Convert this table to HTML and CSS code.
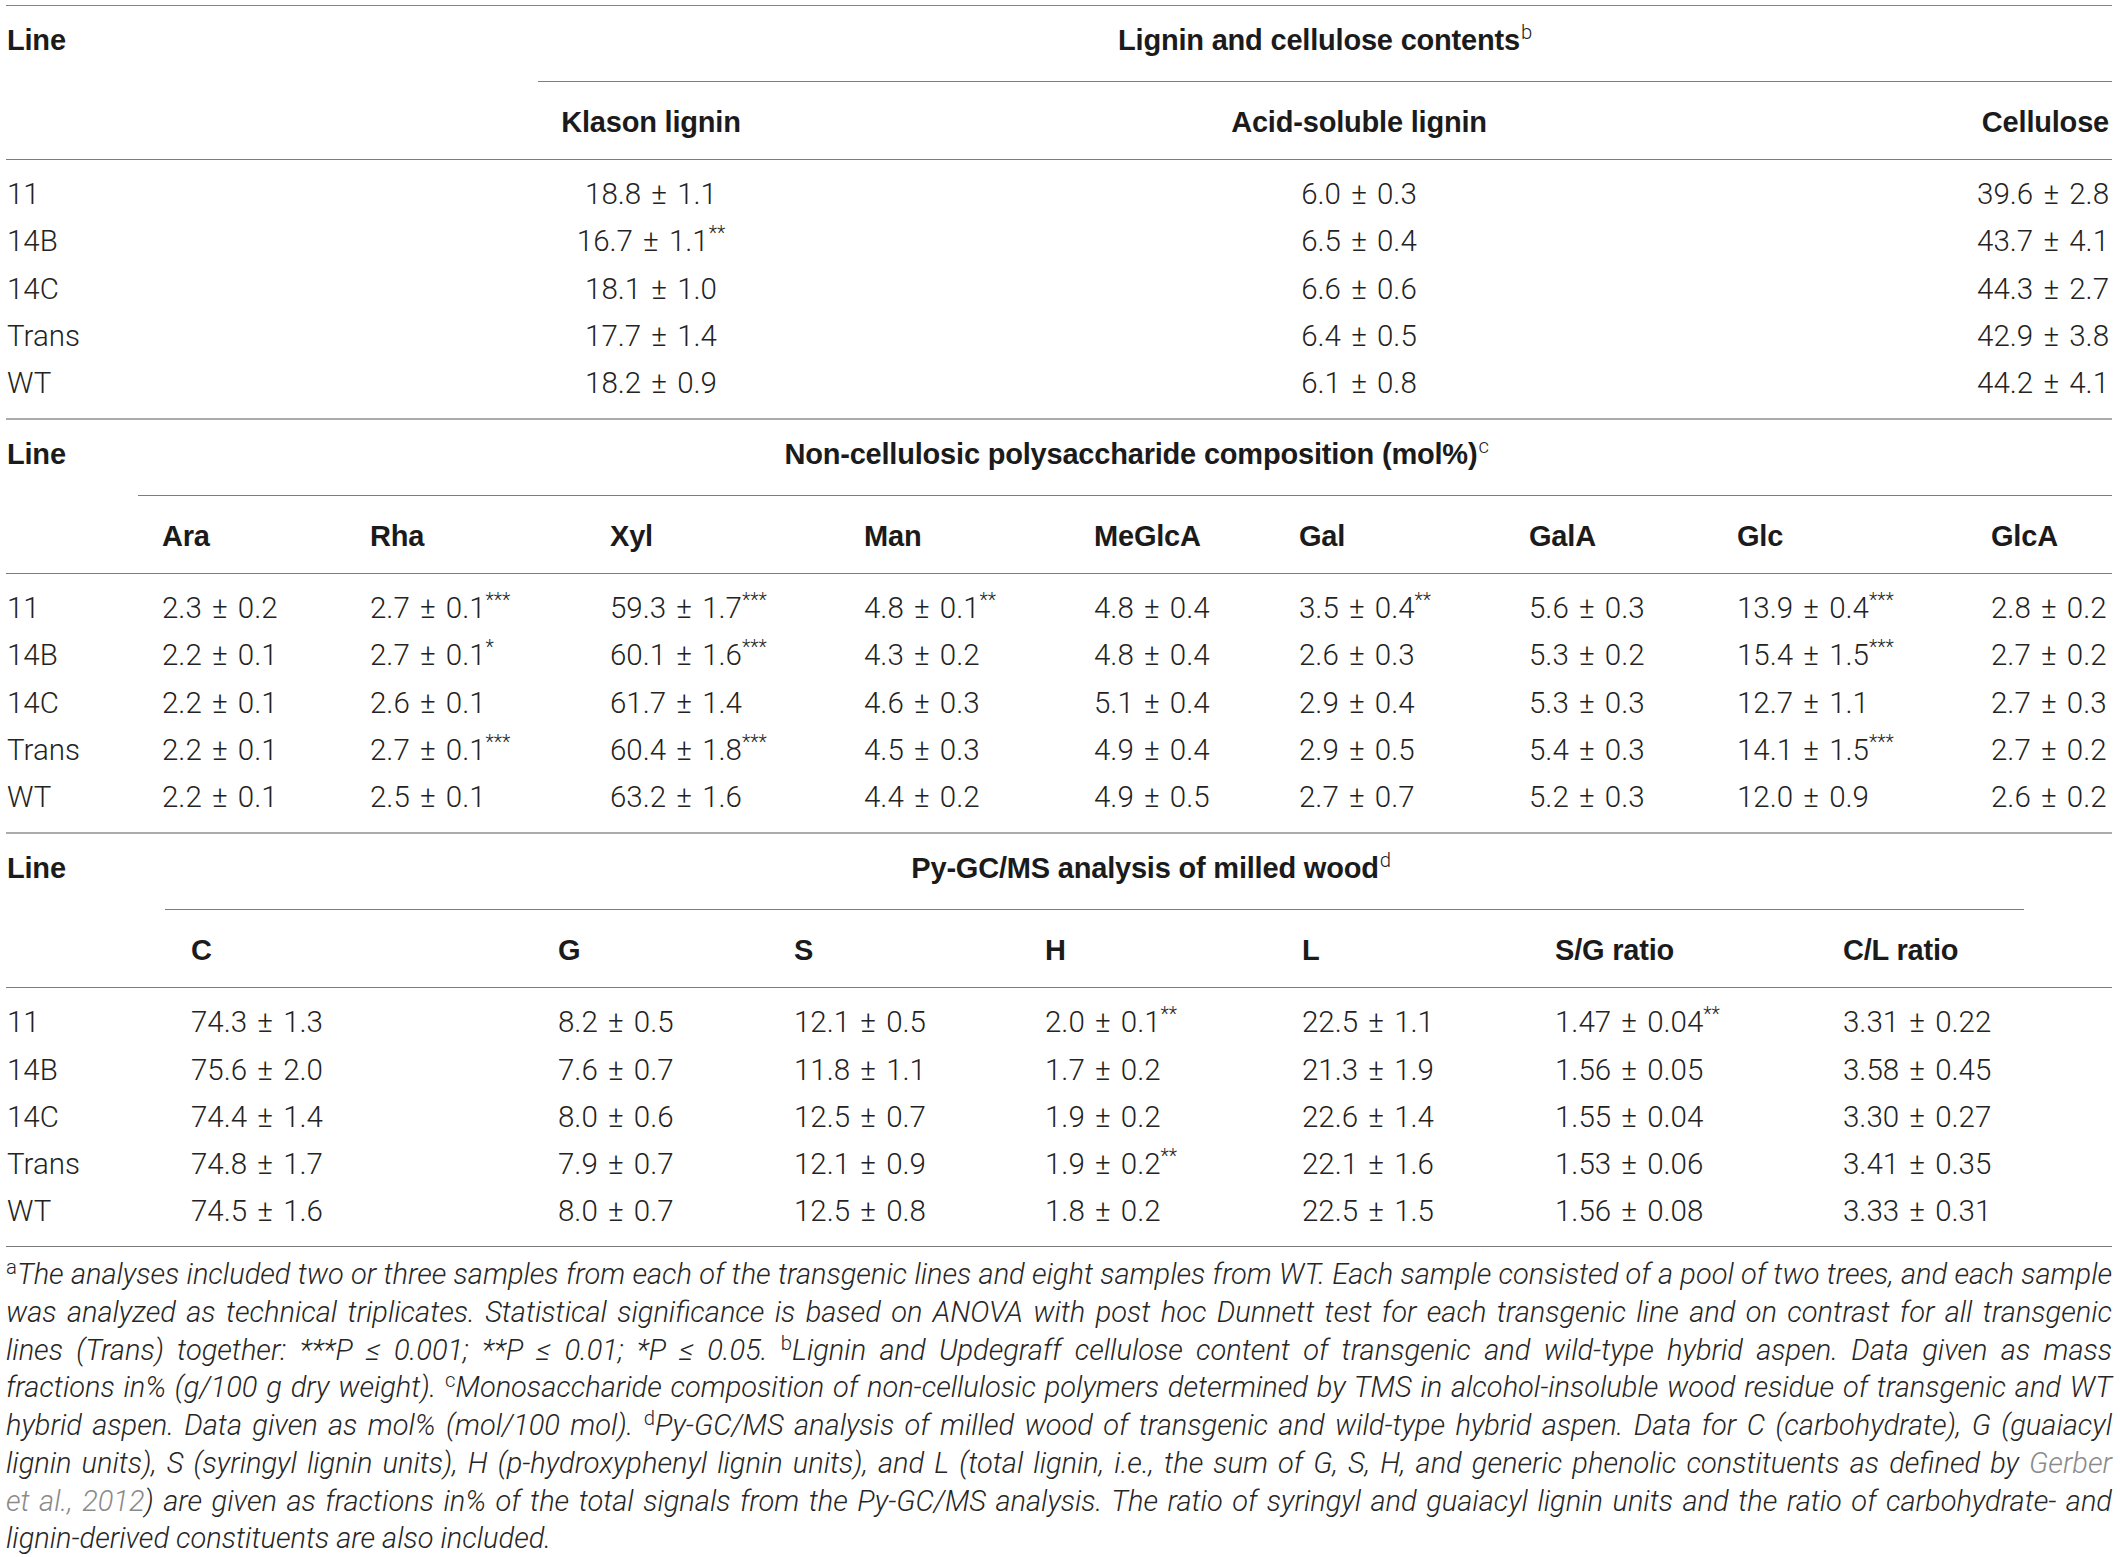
FILE: index.html
```html
<!DOCTYPE html>
<html lang="en">
<head>
<meta charset="utf-8">
<title>Wood composition table</title>
<link rel="stylesheet" href="styles.css">
</head>
<body>
<div class="page">
<table class="tbl tbl-first">
  <colgroup><col class="w532"><col class="w226"><col class="w1190"><col class="w158"></colgroup>
  <thead>
    <tr class="r-span"><th>Line</th><th colspan="3" class="ctr">Lignin and cellulose contents<sup>b</sup></th></tr>
    <tr class="r-cols"><th class="nol"></th><th class="ctr">Klason lignin</th><th class="ctr">Acid-soluble lignin</th><th class="rt">Cellulose</th></tr>
  </thead>
  <tbody>
    <tr><td>11</td><td class="ctr">18.8 ± 1.1</td><td class="ctr">6.0 ± 0.3</td><td class="rt">39.6 ± 2.8</td></tr>
    <tr><td>14B</td><td class="ctr">16.7 ± 1.1<sup>**</sup></td><td class="ctr">6.5 ± 0.4</td><td class="rt">43.7 ± 4.1</td></tr>
    <tr><td>14C</td><td class="ctr">18.1 ± 1.0</td><td class="ctr">6.6 ± 0.6</td><td class="rt">44.3 ± 2.7</td></tr>
    <tr><td>Trans</td><td class="ctr">17.7 ± 1.4</td><td class="ctr">6.4 ± 0.5</td><td class="rt">42.9 ± 3.8</td></tr>
    <tr><td>WT</td><td class="ctr">18.2 ± 0.9</td><td class="ctr">6.1 ± 0.8</td><td class="rt">44.2 ± 4.1</td></tr>
  </tbody>
</table>

<table class="tbl tbl-mono">
  <colgroup><col class="w132"><col class="w208"><col class="w240"><col class="w254"><col class="w230"><col class="w205"><col class="w230"><col class="w208"><col class="w254"><col class="w145"></colgroup>
  <thead>
    <tr class="r-span"><th>Line</th><th colspan="9" class="ctr">Non-cellulosic polysaccharide composition (mol%)<sup>c</sup></th></tr>
    <tr class="r-cols"><th class="nol"></th><th>Ara</th><th>Rha</th><th>Xyl</th><th>Man</th><th>MeGlcA</th><th>Gal</th><th>GalA</th><th>Glc</th><th>GlcA</th></tr>
  </thead>
  <tbody>
    <tr><td>11</td><td>2.3 ± 0.2</td><td>2.7 ± 0.1<sup>***</sup></td><td>59.3 ± 1.7<sup>***</sup></td><td>4.8 ± 0.1<sup>**</sup></td><td>4.8 ± 0.4</td><td>3.5 ± 0.4<sup>**</sup></td><td>5.6 ± 0.3</td><td>13.9 ± 0.4<sup>***</sup></td><td>2.8 ± 0.2</td></tr>
    <tr><td>14B</td><td>2.2 ± 0.1</td><td>2.7 ± 0.1<sup>*</sup></td><td>60.1 ± 1.6<sup>***</sup></td><td>4.3 ± 0.2</td><td>4.8 ± 0.4</td><td>2.6 ± 0.3</td><td>5.3 ± 0.2</td><td>15.4 ± 1.5<sup>***</sup></td><td>2.7 ± 0.2</td></tr>
    <tr><td>14C</td><td>2.2 ± 0.1</td><td>2.6 ± 0.1</td><td>61.7 ± 1.4</td><td>4.6 ± 0.3</td><td>5.1 ± 0.4</td><td>2.9 ± 0.4</td><td>5.3 ± 0.3</td><td>12.7 ± 1.1</td><td>2.7 ± 0.3</td></tr>
    <tr><td>Trans</td><td>2.2 ± 0.1</td><td>2.7 ± 0.1<sup>***</sup></td><td>60.4 ± 1.8<sup>***</sup></td><td>4.5 ± 0.3</td><td>4.9 ± 0.4</td><td>2.9 ± 0.5</td><td>5.4 ± 0.3</td><td>14.1 ± 1.5<sup>***</sup></td><td>2.7 ± 0.2</td></tr>
    <tr><td>WT</td><td>2.2 ± 0.1</td><td>2.5 ± 0.1</td><td>63.2 ± 1.6</td><td>4.4 ± 0.2</td><td>4.9 ± 0.5</td><td>2.7 ± 0.7</td><td>5.2 ± 0.3</td><td>12.0 ± 0.9</td><td>2.6 ± 0.2</td></tr>
  </tbody>
</table>

<table class="tbl tbl-py">
  <colgroup><col class="w159"><col class="w367"><col class="w236"><col class="w251"><col class="w257"><col class="w253"><col class="w288"><col class="w207"><col class="w88"></colgroup>
  <thead>
    <tr class="r-span"><th>Line</th><th colspan="8" class="ctr">Py-GC/MS analysis of milled wood<sup>d</sup></th></tr>
    <tr class="r-cols"><th class="nol"></th><th>C</th><th>G</th><th>S</th><th>H</th><th>L</th><th>S/G ratio</th><th>C/L ratio</th><th class="nol"></th></tr>
  </thead>
  <tbody>
    <tr><td>11</td><td>74.3 ± 1.3</td><td>8.2 ± 0.5</td><td>12.1 ± 0.5</td><td>2.0 ± 0.1<sup>**</sup></td><td>22.5 ± 1.1</td><td>1.47 ± 0.04<sup>**</sup></td><td>3.31 ± 0.22</td><td></td></tr>
    <tr><td>14B</td><td>75.6 ± 2.0</td><td>7.6 ± 0.7</td><td>11.8 ± 1.1</td><td>1.7 ± 0.2</td><td>21.3 ± 1.9</td><td>1.56 ± 0.05</td><td>3.58 ± 0.45</td><td></td></tr>
    <tr><td>14C</td><td>74.4 ± 1.4</td><td>8.0 ± 0.6</td><td>12.5 ± 0.7</td><td>1.9 ± 0.2</td><td>22.6 ± 1.4</td><td>1.55 ± 0.04</td><td>3.30 ± 0.27</td><td></td></tr>
    <tr><td>Trans</td><td>74.8 ± 1.7</td><td>7.9 ± 0.7</td><td>12.1 ± 0.9</td><td>1.9 ± 0.2<sup>**</sup></td><td>22.1 ± 1.6</td><td>1.53 ± 0.06</td><td>3.41 ± 0.35</td><td></td></tr>
    <tr><td>WT</td><td>74.5 ± 1.6</td><td>8.0 ± 0.7</td><td>12.5 ± 0.8</td><td>1.8 ± 0.2</td><td>22.5 ± 1.5</td><td>1.56 ± 0.08</td><td>3.33 ± 0.31</td><td></td></tr>
  </tbody>
</table>

<p class="notes">
  <span class="ln"><sup>a</sup>The analyses included two or three samples from each of the transgenic lines and eight samples from WT. Each sample consisted of a pool of two trees, and each sample</span>
  <span class="ln">was analyzed as technical triplicates. Statistical significance is based on ANOVA with post hoc Dunnett test for each transgenic line and on contrast for all transgenic</span>
  <span class="ln">lines (Trans) together: ***P ≤ 0.001; **P ≤ 0.01; *P ≤ 0.05. <sup>b</sup>Lignin and Updegraff cellulose content of transgenic and wild-type hybrid aspen. Data given as mass</span>
  <span class="ln">fractions in% (g/100 g dry weight). <sup>c</sup>Monosaccharide composition of non-cellulosic polymers determined by TMS in alcohol-insoluble wood residue of transgenic and WT</span>
  <span class="ln">hybrid aspen. Data given as mol% (mol/100 mol). <sup>d</sup>Py-GC/MS analysis of milled wood of transgenic and wild-type hybrid aspen. Data for C (carbohydrate), G (guaiacyl</span>
  <span class="ln">lignin units), S (syringyl lignin units), H (p-hydroxyphenyl lignin units), and L (total lignin, i.e., the sum of G, S, H, and generic phenolic constituents as defined by <a class="ref">Gerber</a></span>
  <span class="ln"><a class="ref">et al., 2012</a>) are given as fractions in% of the total signals from the Py-GC/MS analysis. The ratio of syringyl and guaiacyl lignin units and the ratio of carbohydrate- and</span>
  <span class="ln last">lignin-derived constituents are also included.</span>
</p>
</div>
</body>
</html>
```

FILE: styles.css
```css
html, body {
  margin: 0;
  padding: 0;
  background: #ffffff;
}

.page {
  padding: 5px 8px 0 6px;
  color: #232323;
  font-family: Roboto, "Liberation Sans", Arial, sans-serif;
  font-weight: 300;
}

.tbl {
  width: 2106px;
  border-collapse: collapse;
  table-layout: fixed;
  font-size: 29.5px;
  word-spacing: 3px;
  border-bottom: 2px solid #ababab;
}

.tbl-first {
  border-top: 1px solid #858585;
}

.tbl-py {
  border-bottom: 1px solid #7a7a7a;
}

/* column widths */
.w88 { width: 88px; }
.w132 { width: 132px; }
.w145 { width: 145px; }
.w158 { width: 158px; }
.w159 { width: 159px; }
.w205 { width: 205px; }
.w207 { width: 207px; }
.w208 { width: 208px; }
.w226 { width: 226px; }
.w230 { width: 230px; }
.w236 { width: 236px; }
.w240 { width: 240px; }
.w251 { width: 251px; }
.w253 { width: 253px; }
.w254 { width: 254px; }
.w257 { width: 257px; }
.w288 { width: 288px; }
.w367 { width: 367px; }
.w532 { width: 532px; }
.w1190 { width: 1190px; }

th, td {
  text-align: left;
  vertical-align: top;
  line-height: 34px;
  white-space: nowrap;
}

th {
  font-family: "Liberation Sans", Arial, sans-serif;
  font-weight: 700;
  color: #1b1b1b;
  font-size: 29px;
  word-spacing: 0;
  letter-spacing: -0.2px;
}

td {
  padding: 6.65px 0;
}

th:first-child, td:first-child {
  padding-left: 1px;
}

.tbl-mono th + th, .tbl-mono td + td {
  padding-left: 24px;
}

.tbl-py th + th, .tbl-py td + td {
  padding-left: 26px;
}

.r-span th {
  padding-top: 17px;
  padding-bottom: 24px;
}

.r-cols th {
  padding-top: 23px;
  padding-bottom: 20px;
  border-top: 1px solid #7d7d7d;
  border-bottom: 1px solid #7d7d7d;
}

.r-cols th.nol {
  border-top: 0;
}

tbody tr:first-child td {
  padding-top: 17px;
}

tbody tr:last-child td {
  padding-bottom: 18px;
}

.ctr {
  text-align: center;
}

.rt {
  text-align: right;
  padding-right: 3px;
}

sup {
  font-family: Roboto, "Liberation Sans", Arial, sans-serif;
  font-weight: 300;
  font-size: 0.66em;
  line-height: 0;
  vertical-align: 0.55em;
  word-spacing: 0;
}

th sup {
  font-size: 0.7em;
  margin-left: 1px;
}

.notes {
  margin: 9px 0 0 0;
  font-size: 29px;
  line-height: 37.7px;
  font-style: italic;
  color: #262626;
}

.ln {
  display: block;
  text-align: justify;
  text-align-last: justify;
  white-space: normal;
}

.ln.last {
  text-align-last: left;
}

.notes sup {
  font-style: normal;
  font-size: 0.7em;
  vertical-align: 0.5em;
}

.ref {
  color: #8a8a8a;
  text-decoration: none;
}
```
